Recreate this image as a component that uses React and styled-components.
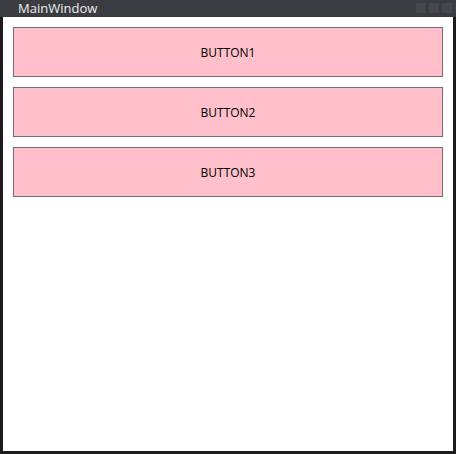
import React from 'react';
import styled, { createGlobalStyle } from 'styled-components';

const GlobalStyle = createGlobalStyle`
  html, body { margin: 0; padding: 0; background: #ffffff; }
  body { font-family: "Open Sans", "Noto Sans", sans-serif; }
`;

const buttons = ['BUTTON1', 'BUTTON2', 'BUTTON3'];

function App() {
  return (
    <>
      <GlobalStyle />
      <Frame>
        <TitleBar>
          <Title>MainWindow</Title>
          <Controls>
            <ControlBox />
            <ControlBox />
            <ControlBox />
          </Controls>
        </TitleBar>
        <Client>
          {buttons.map((label) => (
            <PinkButton key={label}>{label}</PinkButton>
          ))}
        </Client>
      </Frame>
    </>
  );
}

// ************** window chrome *****************
const Frame = styled.div`
width: 456px;
height: 454px;
box-sizing: border-box;
display: flex;
flex-direction: column;
background: #1c1c1e;
border: 3px solid #1c1c1e;
border-top: none;
`;

const TitleBar = styled.div`
height: 17px;
margin: 0 -3px;
padding: 0 4px 0 18px;
background: #3b3c41;
display: flex;
align-items: center;
justify-content: space-between;
`;

const Title = styled.span`
color: #eeeeee;
font-size: 13px;
line-height: 17px;
`;

const Controls = styled.div`
display: flex;
gap: 3px;
align-self: flex-start;
margin-top: 3px;
`;

const ControlBox = styled.div`
width: 10px;
height: 10px;
background: #46474c;
`;

// ************** client area *****************
const Client = styled.div`
flex: 1;
background: #ffffff;
padding: 10px;
display: flex;
flex-direction: column;
gap: 10px;
`;

const PinkButton = styled.button`
height: 50px;
width: 100%;
box-sizing: border-box;
background: #ffc0cb;
border: 1px solid #707070;
font-family: "Open Sans", "Noto Sans", sans-serif;
font-size: 12px;
color: #000000;
cursor: pointer;
padding: 0;
`;

export default App;
